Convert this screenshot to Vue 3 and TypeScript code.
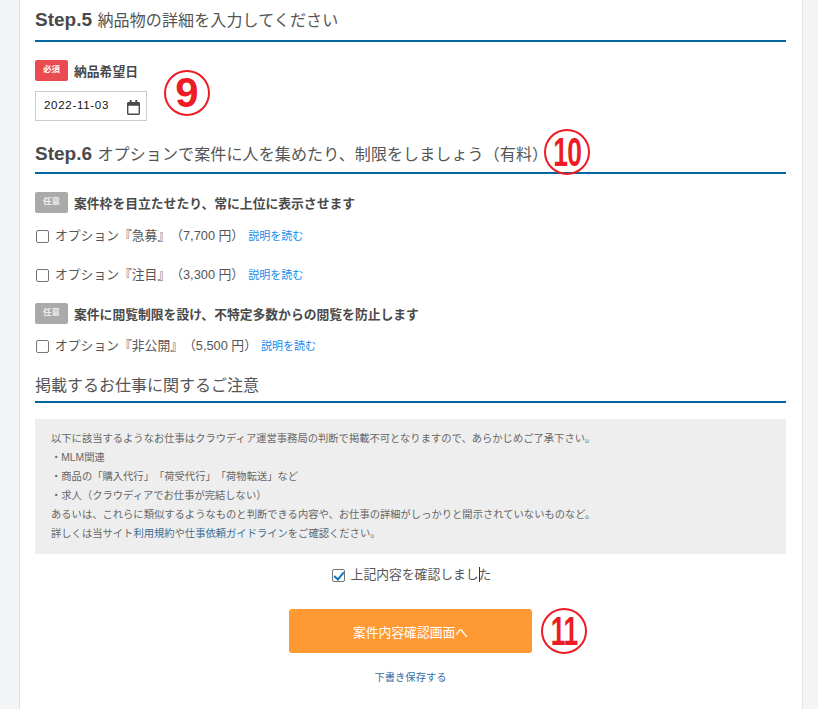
<script setup lang="ts">
interface Option { label: string; price: string }
const highlight: Option[] = [
  { label: 'オプション『急募』', price: '\uFF087,700 円\uFF09' },
  { label: 'オプション『注目』', price: '\uFF083,300 円\uFF09' },
]
const restrict: Option = { label: 'オプション『非公開』', price: '\uFF085,500 円\uFF09' }
const notice: string[] = [
  '以下に該当するようなお仕事はクラウディア運営事務局の判断で掲載不可となりますので、あらかじめご了承下さい。',
  '・MLM関連',
  '・商品の「購入代行」「荷受代行」「荷物転送」など',
  '・求人\uFF08クラウディアでお仕事が完結しない\uFF09',
  'あるいは、これらに類似するようなものと判断できる内容や、お仕事の詳細がしっかりと開示されていないものなど。',
]
</script>

<template>
  <div class="page">
    <main class="card">
      <h2 class="heading first"><b>Step.5</b> <span class="step-text">納品物の詳細を入力してください</span></h2>

      <div class="label-row req-row">
        <span class="badge red">必須</span><span class="label">納品希望日</span>
      </div>
      <div class="date-wrap">
        <div class="date">
          <span>2022-11-03</span>
          <svg width="13" height="15" viewBox="0 0 14 16" aria-hidden="true">
            <path fill="#4a4a4a" fill-rule="evenodd" d="M3 0h2v2h4V0h2v2h1.500A1.500 1.500 0 0 1 14 3.500v11a1.500 1.500 0 0 1-1.500 1.500h-11A1.500 1.500 0 0 1 0 14.500v-11A1.500 1.500 0 0 1 1.500 2H3zM1.500 6v8.500h11V6z"/>
          </svg>
        </div>
        <span class="mark mark-9">9</span>
      </div>

      <div class="step6-wrap">
        <h2 class="heading step6"><b>Step.6</b> <span class="step-text">オプションで案件に人を集めたり、制限をしましょう&#xFF08;有料&#xFF09;</span></h2>
        <span class="mark mark-10"><i>10</i></span>
      </div>

      <div class="label-row opt-head">
        <span class="badge grey">任意</span><span class="label">案件枠を目立たせたり、常に上位に表示させます</span>
      </div>
      <label v-for="o in highlight" :key="o.label" class="option">
        <input type="checkbox" />
        <span class="opt-text">{{ o.label }}{{ o.price }}</span>
        <a class="more">説明を読む</a>
      </label>

      <div class="label-row opt-head second">
        <span class="badge grey">任意</span><span class="label">案件に閲覧制限を設け、不特定多数からの閲覧を防止します</span>
      </div>
      <label class="option">
        <input type="checkbox" />
        <span class="opt-text">{{ restrict.label }}{{ restrict.price }}</span>
        <a class="more">説明を読む</a>
      </label>

      <h2 class="heading notice-title">掲載するお仕事に関するご注意</h2>

      <section class="notice">
        <p v-for="line in notice" :key="line">{{ line }}</p>
        <p>詳しくは当サイト<a>利用規約</a>や<a>仕事依頼ガイドライン</a>をご確認ください。</p>
      </section>

      <label class="confirm">
        <input type="checkbox" checked />
        <span class="confirm-text">上記内容を確認しました<i class="caret"></i></span>
      </label>

      <div class="submit-row">
        <button class="submit" type="button">案件内容確認画面へ</button>
        <span class="mark mark-11"><i>11</i></span>
      </div>

      <a class="draft">下書き保存する</a>
    </main>
  </div>
</template>

<style>
html, body { margin: 0; }
</style>

<style scoped>
.page {
  height: 709px;
  overflow: hidden;
  background: #f3f4f6;
  padding: 0 15px 0 19px;
  box-sizing: border-box;
  font-family: "Liberation Sans", "Noto Sans CJK JP", sans-serif;
  color: #4a4a4a;
  text-spacing-trim: space-all;
}
.card {
  background: #fff;
  border-left: 1px solid #e2e2e2;
  border-right: 1px solid #e2e2e2;
  height: 709px;
  padding: 0 16px 0 15px;
  box-sizing: border-box;
}
.heading {
  margin: 0;
  font-size: 16px;
  font-weight: 400;
  line-height: 24px;
  border-bottom: 2px solid #0066a0;
  color: #555;
  white-space: nowrap;
}
.heading b { font-size: 19px; font-weight: 700; color: #4a4a4a; margin-right: 1px; }
.step-text { letter-spacing: 0.12px; }
.first { padding: 8px 0 7px; }
.label-row { display: flex; align-items: center; font-size: 12.8px; font-weight: 700; line-height: 21px; }
.label { position: relative; top: 1px; }
.req-row { margin-top: 18px; }
.badge {
  width: 33px;
  height: 21px;
  border-radius: 2px;
  margin-right: 6px;
  color: #fff;
  font-size: 8.500px;
  font-weight: 700;
  line-height: 18px;
  text-align: center;
  flex: none;
}
.red { background: #e94b50; }
.grey { background: #aaa; color: #eee; }
.date-wrap { position: relative; margin-top: 10px; height: 30px; }
.date {
  width: 112px;
  height: 30px;
  box-sizing: border-box;
  border: 1px solid #ccc;
  display: flex;
  align-items: center;
  justify-content: space-between;
  padding: 0 6px 0 8px;
  font-family: "Liberation Sans", sans-serif;
  font-size: 11.500px;
  letter-spacing: 0.7px;
  color: #111;
}
.date span { position: relative; top: -1px; }
.date svg { position: relative; top: 1px; }
.step6-wrap { position: relative; margin-top: 15px; }
.step6 { padding: 6px 0 5px; }
.opt-head { margin-top: 18px; }
.opt-head.second { margin-top: 20px; }
.option {
  display: flex;
  align-items: center;
  height: 20px;
  margin-top: 11px;
  font-size: 12.8px;
  white-space: nowrap;
}
.option + .option { margin-top: 19px; }
.second + .option { margin-top: 10px; }
.option input, .confirm input {
  appearance: none;
  box-sizing: border-box;
  position: relative;
  width: 13px;
  height: 13px;
  flex: none;
  background: #fff;
  border: 1px solid #767676;
  border-radius: 2px;
}
.option input { margin: 5px 6px 0 1px; }
.confirm input:checked::after {
  content: "";
  position: absolute;
  left: 3px;
  top: 0;
  width: 4px;
  height: 8px;
  border: solid #0f76bd;
  border-width: 0 2px 2px 0;
  transform: rotate(40deg);
}
.opt-text { color: #555; }
.more { color: #1a8cf0; font-size: 11px; margin-left: 4px; position: relative; top: 1px; }
.notice-title { margin-top: 20px; padding-bottom: 3px; }
.notice {
  margin-top: 16px;
  background: #eeeeee;
  padding: 10px 16px 11px;
  font-size: 10.300px;
  line-height: 19px;
  color: #666;
}
.notice p { margin: 0; white-space: nowrap; }
.notice a { color: #3a6f96; }
.confirm {
  display: flex;
  align-items: center;
  justify-content: center;
  margin-top: 9px;
  padding-left: 2px;
  height: 20px;
  font-size: 12.8px;
  color: #555;
}
.confirm input { margin: 4px 6px 0 0; }
.confirm-text { position: relative; }
.caret { position: absolute; left: 128px; top: 3px; width: 1px; height: 15px; background: #333; }
.submit-row { position: relative; display: flex; justify-content: center; margin-top: 26px; }
.submit {
  width: 243px;
  height: 44px;
  border: 0;
  border-radius: 3px;
  background: #ff9933;
  color: #fff;
  font: inherit;
  font-size: 12.8px;
  padding: 0;
}
.draft {
  display: block;
  text-align: center;
  margin-top: 18px;
  font-size: 10.300px;
  line-height: 14px;
  color: #3a6ea5;
}
.mark {
  position: absolute;
  box-sizing: border-box;
  width: 46px;
  height: 46px;
  border: 2px solid #ed1c24;
  border-radius: 50%;
  background: transparent;
  color: #ed1c24;
  display: flex;
  align-items: center;
  justify-content: center;
  font-family: "Liberation Sans", sans-serif;
  font-weight: 700;
  font-size: 42px;
  line-height: 1;
}
.mark i { font-style: normal; display: block; transform: scaleX(0.66); letter-spacing: -1px; font-size: 40px; }
.mark-9 { left: 129px; top: -21px; }
.mark-10 { left: 509px; top: -7px; }
.mark-11 { left: 506px; top: -1px; }
</style>
